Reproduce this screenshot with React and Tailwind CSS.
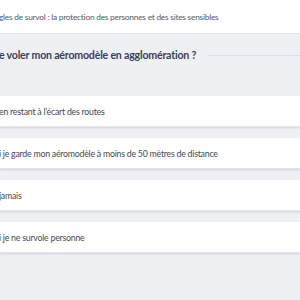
export default function App() {
  const answers = [
    'en restant à l\u2019écart des routes',
    'i je garde mon aéromodèle à moins de 50 mètres de distance',
    'jamais',
    'i je ne survole personne',
  ];

  return (
    <div className="w-[300px] h-[300px] overflow-hidden bg-[#eff0f4]" style={{ fontFamily: 'Lato, sans-serif' }}>
      {/* Fil d'ariane */}
      <div className="h-[34px] bg-white border-b border-[#e2e4ea] flex items-center pt-[1px]">
        <span className="text-[8.4px] tracking-[-0.25px] text-[#555a66] whitespace-nowrap ml-[-1px]">
          gles de survol : la protection des personnes et des sites sensibles
        </span>
      </div>

      {/* Question */}
      <div className="h-[62px] flex items-start pt-[14px] gap-3">
        <h2 className="text-[10.6px] tracking-[-0.2px] font-bold text-[#3a3f5c] whitespace-nowrap ml-[-1px]">
          e voler mon aéromodèle en agglomération ?
        </h2>
        <div className="flex-1 h-px bg-[#dcdee5] mt-[7px]" />
      </div>

      {/* Réponses */}
      <div className="flex flex-col gap-[11px]">
        {answers.map((a) => (
          <div
            key={a}
            className="h-[31px] bg-white flex items-center pt-[1px] shadow-[0_1px_2px_rgba(0,0,0,0.12)] border-b border-[#e3e5ea]"
          >
            <span className="text-[8.8px] tracking-[-0.25px] text-[#444a55] whitespace-nowrap ml-[-1px]">{a}</span>
          </div>
        ))}
      </div>
    </div>
  );
}
